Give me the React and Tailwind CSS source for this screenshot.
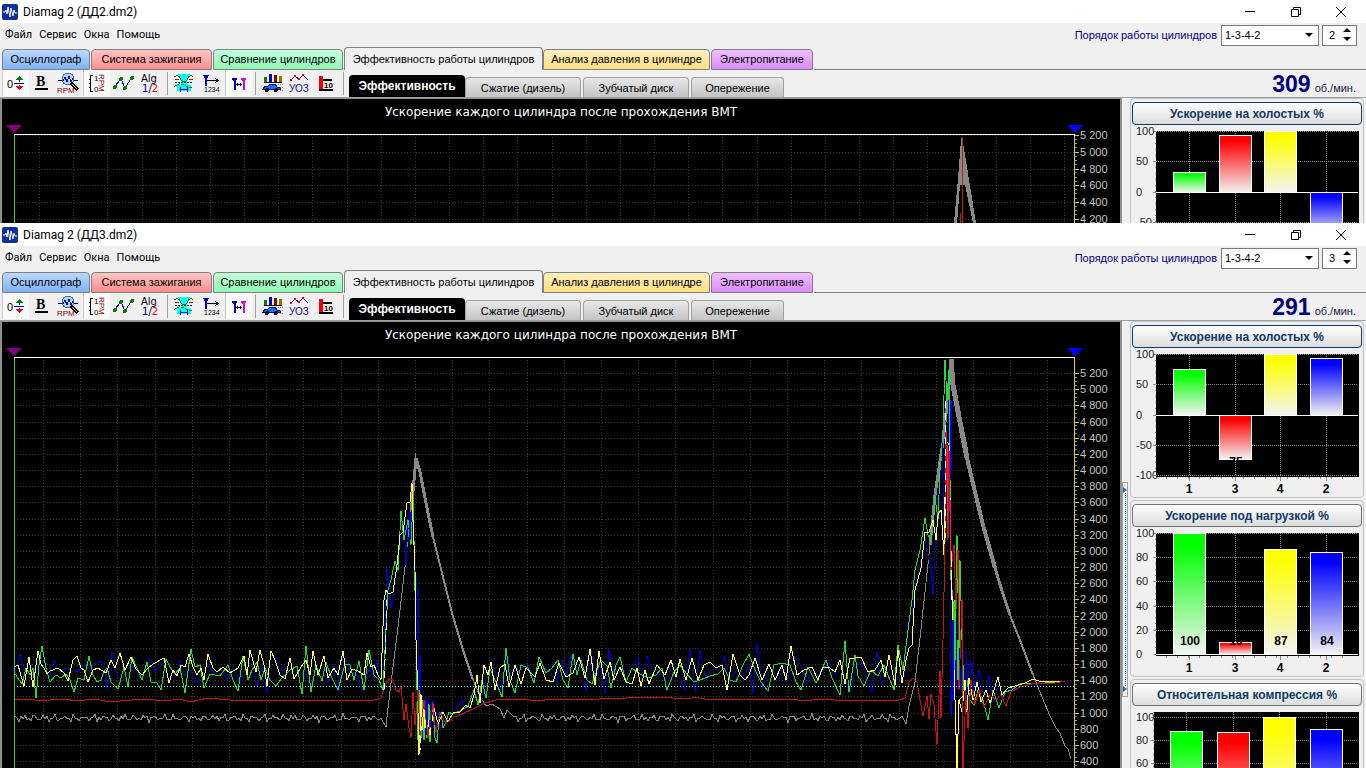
import { useState } from "react";

const mainTabs = [
  { name: "Осциллограф", style: "w-[88px] from-[#bcd8ff] to-[#7fb2f8]" },
  { name: "Система зажигания", style: "w-[121px] from-[#ffc4c4] to-[#fb8e8e]" },
  { name: "Сравнение цилиндров", style: "w-[130px] from-[#c4ffdc] to-[#8ef8b4]" },
  { name: "Эффективность работы цилиндров", style: "w-[199px]", active: true },
  { name: "Анализ давления в цилиндре", style: "w-[167px] from-[#fff0c0] to-[#ffdf80]" },
  { name: "Электропитание", style: "w-[102px] from-[#eebfff] to-[#d98cfa]" },
];

const subTabs = [
  { name: "Сжатие (дизель)", style: "w-[116px]" },
  { name: "Зубчатый диск", style: "w-[106px]" },
  { name: "Опережение", style: "w-[93px]" },
];

const green = "14,672 17,677 22,684 26,668 30,675 33,668 36,698 39,665 42,646 46,668 50,682 56,675 61,678 66,674 70,680 74,692 78,678 84,680 89,656 93,675 97,682 101,680 104,671 107,668 111,682 118,689 124,667 128,687 132,657 137,668 142,680 147,662 151,682 157,683 161,690 166,659 170,667 175,674 180,668 185,693 191,649 195,667 200,665 204,688 210,674 220,676 228,665 233,680 238,691 243,656 248,680 252,670 257,662 261,680 265,668 270,680 276,686 282,678 290,670 297,666 302,694 306,646 311,692 316,665 322,681 326,662 331,676 338,690 345,664 350,665 354,680 359,661 364,690 369,650 374,675 379,680 383,690 386,630 388,590 391,580 395,561 398,570 401,511 404,540 408,520 411,545 413,500 414,540 416,640 417,690 418,740 419,690 421,738 423,700 424,740 426,712 427,738 429,704 430,742 432,712 433,705 435,738 437,743 439,718 441,712 443,728 446,722 449,712 452,714 460,711 468,706 474,690 478,705 482,680 486,698 490,669 496,682 502,697 506,648 510,680 515,693 521,665 528,668 534,683 539,657 546,673 552,668 558,660 563,680 568,688 573,654 577,675 581,660 587,680 592,684 597,670 601,660 607,666 611,688 616,665 620,657 626,682 632,668 638,673 648,678 656,675 662,668 667,690 674,672 680,665 686,673 694,682 700,680 710,676 718,674 724,668 730,680 736,682 743,665 749,654 755,670 761,682 768,691 774,665 782,663 790,665 796,682 801,690 808,667 816,683 826,660 832,678 840,695 845,641 849,692 855,655 858,676 864,686 871,670 878,676 884,665 890,680 894,690 898,645 903,670 908,630 912,600 915,570 920,550 925,518 928,535 931,540 935,497 938,520 940,470 943,430 945,360 947,400 949,370 950,480 951,580 953,600 955,690 956,600 957,535 959,650 960,560 962,640 964,690 967,680 970,700 974,705 978,690 983,700 988,720 993,690 999,708 1005,692 1012,690 1020,684 1030,683 1045,683 1065,681";

const yellow = "14,667 18,665 24,686 29,657 33,687 38,651 41,664 44,668 47,674 50,671 58,668 64,673 68,681 73,660 77,656 81,668 84,670 88,682 93,670 98,668 106,673 111,660 115,668 120,653 125,670 131,657 136,669 142,675 148,668 153,664 164,658 169,683 173,670 177,676 181,665 185,667 189,654 193,667 197,675 201,668 204,680 208,654 213,668 217,672 223,667 230,673 238,668 244,656 247,675 250,650 256,672 260,650 264,665 267,686 271,651 275,660 280,675 285,679 290,658 294,679 301,667 306,660 310,675 313,651 318,675 324,656 328,678 334,668 338,675 343,651 347,680 352,669 358,671 364,675 367,653 371,667 374,665 378,675 381,680 384,600 386,590 389,594 393,592 397,565 400,535 403,532 407,503 410,502 412,483 413,520 415,570 416,640 418,700 419,755 421,694 422,730 424,705 425,728 427,712 430,735 434,708 438,724 443,712 448,722 453,713 460,712 466,705 470,708 474,695 477,675 480,703 484,665 488,675 491,662 495,690 500,668 505,664 509,687 515,665 521,684 526,668 535,677 540,663 546,680 553,682 559,663 566,677 573,673 579,657 585,678 590,649 595,685 599,651 604,679 610,662 614,680 620,667 626,682 632,684 637,668 641,686 645,670 649,684 657,665 665,675 671,660 676,677 680,659 686,680 692,658 698,680 704,665 710,662 716,668 722,665 727,690 733,654 740,675 745,680 749,675 755,658 762,680 769,664 775,680 782,665 786,680 791,646 797,675 804,670 812,667 818,680 823,667 830,668 835,672 840,660 845,684 850,658 855,658 861,657 868,672 875,670 881,660 885,677 889,655 895,685 898,650 902,683 906,660 909,648 912,645 915,590 921,568 925,532 929,532 933,520 936,540 938,515 941,510 944,555 946,440 949,445 951,550 953,640 955,700 957,768 959,700 962,712 965,680 967,712 969,678 973,700 977,682 981,702 986,690 990,703 998,677 1002,695 1008,688 1015,686 1025,683 1033,679 1042,682 1060,681";

const blue = "14,678 17,665 20,654 24,670 30,660 34,678 40,655 44,664 49,677 54,660 60,672 66,668 72,670 78,672 84,664 89,670 94,664 100,661 104,664 107,689 112,651 116,672 120,680 125,664 131,665 137,672 142,680 150,658 155,672 162,662 169,680 175,676 180,660 185,676 191,670 195,683 201,678 207,664 214,673 222,670 227,680 233,667 240,684 246,662 252,664 257,686 262,665 267,692 271,651 277,662 283,676 289,659 294,670 300,677 306,670 310,686 316,670 321,668 328,683 333,666 339,692 343,653 350,671 356,674 363,691 369,668 374,680 377,660 380,680 383,694 385,630 387,568 389,590 391,608 394,590 398,560 401,540 404,520 406,565 408,520 410,538 412,510 415,560 417,590 418,640 419,720 420,655 422,740 423,698 425,735 426,697 428,728 429,702 431,730 433,700 434,728 436,735 437,712 438,730 442,710 444,725 447,719 454,712 462,700 466,710 472,696 478,690 482,700 488,667 494,668 501,690 506,656 510,684 514,665 520,670 528,665 534,679 540,667 546,670 552,664 557,682 562,660 566,677 571,655 576,672 581,657 586,691 591,650 596,680 600,662 605,693 609,650 615,676 622,668 629,675 638,658 643,680 647,656 654,676 661,674 666,680 672,662 678,675 685,690 690,649 695,691 700,650 706,680 713,665 719,670 725,656 730,681 737,669 744,678 749,665 753,693 757,643 763,688 769,665 774,672 779,680 783,664 788,682 792,655 800,664 806,684 813,667 819,677 829,662 835,674 840,659 845,680 850,691 855,672 861,660 867,679 872,692 877,652 882,685 888,666 894,684 900,675 904,678 908,622 912,615 916,580 921,560 925,538 928,555 931,570 933,595 937,500 940,480 942,435 944,520 947,450 949,400 950,415 951,716 954,640 956,690 958,620 961,690 963,650 966,690 970,660 974,690 979,670 984,697 989,676 994,702 999,680 1003,698 1010,688 1016,690 1025,685 1035,684 1045,681 1060,682 1068,681";

const red = "14,700 30,699 40,701 60,699 66,699 75,701 95,699 105,701 120,701 145,699 165,701 180,699 190,702 208,698 230,700 245,700 258,701 280,700 310,700 345,700 375,700 381,698 386,684 390,678 393,680 396,690 399,692 401,686 404,720 406,704 409,728 411,738 413,692 415,725 418,690 420,735 424,700 428,738 432,702 436,732 440,712 446,724 454,717 462,714 475,708 485,703 500,699 530,700 545,700 600,699 655,697 690,699 694,697 710,700 790,699 805,701 820,699 850,701 900,700 905,698 909,682 913,678 917,682 920,700 923,716 927,696 929,719 931,694 934,705 937,745 940,670 941,718 943,640 945,545 946,430 948,540 949,450 951,570 954,545 956,610 958,550 959,690 962,600 963,768 966,690 968,728 971,680 975,704 979,690 984,707 990,695 996,700 1001,695 1006,706 1011,692 1020,687 1035,683 1050,684 1065,681";

// idle part of the shaft speed curve, slightly jagged
function jitter(from, to, level) {
  const points = [];
  for (let x = from; x <= to; x += 2) {
    const wave = Math.sin(x * 1.7) * 2 + Math.sin(x * 0.63 + 2) * 2 + Math.sin(x * 4.1);
    points.push(`${x},${Math.round(level + wave)}`);
  }
  return points.join(" ");
}

const shaftStart = `${jitter(15, 382, 718)} 386,727 388,708 391,683 398,627 405,567 411,507 416,453`;
const shaftMiddle = `473,680 480,696 486,706 492,704 500,709 504,718 507,710 513,716 ${jitter(516, 902, 718)} 906,724 909,706 915,682 920,638 925,592 930,545 935,495`;

function ShaftSpeed() {
  return (
    <g fill="none" stroke="#888">
      <polyline points={shaftStart} />
      <polyline strokeWidth="3" points="411,515 414,480 416,458 420,472 427,508 433,537" />
      <polyline strokeWidth="2" points="433,537 442,573 452,613 463,650 473,680" />
      <polyline points={shaftMiddle} />
      <polyline strokeWidth="3" points="930,545 935,495 942,448 947,405 951,362" />
      <polyline strokeWidth="5" points="951,359 953,385 960,422 967,458" />
      <polyline strokeWidth="4" points="967,458 975,492 983,525 995,568" />
      <polyline strokeWidth="3" points="995,568 1003,594 1010,615" />
      <polyline strokeWidth="2" points="1010,615 1023,648 1033,675" />
      <polyline points="1033,675 1040,692 1050,716 1056,728 1060,733 1065,746 1068,749 1071,759" />
    </g>
  );
}

function Signals() {
  return (
    <g fill="none">
      <polyline stroke="#0000c8" points={blue} />
      <polyline stroke="#22dd33" points={green} />
      <polyline stroke="#ffff50" points={yellow} />
      <polyline stroke="#c81414" points={red} />
      <path stroke="#0000e0" strokeWidth="2" d="M951 400V470M953 620V700M956 655V690M410 512V540M427 705V725" />
      <path stroke="#0000c8" d="M418.5 588V690M426.5 700V735M431.5 702V730M966.5 650V700M972.5 662V690" />
      <path stroke="#ff1493" d="M947 445V520M950 500V560M433 704V715" />
      <path stroke="#fff" strokeDasharray="7 5" d="M384 690L387 600M945 540L946 400M951 560V600M420 700V750M959 700L970 690" />
      <path stroke="#22dd33" strokeWidth="2" d="M955 600V660M958 640V680" />
    </g>
  );
}

function AccelerationChart({ file }) {
  const { origin, top, step, gridX, gridStep } = file;
  const rows = Array.from({ length: file.rows }, (_, i) => top + i * step);
  const columns = Array.from({ length: 31 }, (_, i) => gridX + i * gridStep).filter((x) => x < 1070);

  return (
    <div className="flex">
      <div className="ml-3 min-w-0 flex-1">
        <div className="-mx-2 flex h-[9px] justify-between">
          <svg width="16" height="9"><path d="M0 0H16L8 8z" fill="#800080" /></svg>
          <svg width="16" height="9"><path d="M0 0H16L8 8z" fill="#0000ff" /></svg>
        </div>
        <svg
          className="block h-[411px] w-full"
          viewBox={`14 ${origin} 1061 411`}
          preserveAspectRatio="none"
          shapeRendering="crispEdges"
        >
          <g stroke="#3c3c1e" strokeDasharray="1 2">
            {columns.map((x) => (
              <path key={x} d={`M${Math.round(x) + 0.5} ${origin}v411`} />
            ))}
            {rows.map((y) => (
              <path key={y} d={`M14 ${Math.round(y) + 0.5}H1075`} />
            ))}
          </g>
          {file.full ? (
            <>
              <ShaftSpeed />
              <Signals />
              <path d="M14 686.5H1075" stroke="#50ffff" strokeDasharray="1 2" />
            </>
          ) : (
            <>
              <path d="M954 223L958 178L961 140L962 137L965 155L976 223H973L965 185L960 185L957 223z" fill="#888" />
              <path d="M962.5 137V545M960.5 213V545" stroke="#d01414" />
            </>
          )}
          <path d={`M14.5 ${origin}v411`} stroke="#50c850" />
          <path d={`M1074.5 ${origin}v411`} stroke="#d0d050" />
          <path d={`M14 ${origin + 0.5}H1075`} stroke="#fff" />
        </svg>
      </div>
      <svg
        className="mt-[9px] block h-[411px] w-[45px] shrink-0 overflow-visible font-['Liberation_Sans'] text-[11px]"
        viewBox={`1075 ${origin} 45 411`}
      >
        {rows.map((y, i) => (
          <g key={y}>
            <path d={`M1074 ${Math.round(y) + 0.5}h5`} stroke="#d0d050" shapeRendering="crispEdges" />
            <path
              d={`M1075 ${y + step / 4}h2M1075 ${y + step / 2}h2M1075 ${y + (step * 3) / 4}h2`}
              stroke="#909040"
              shapeRendering="crispEdges"
            />
            <text x="1080" y={Math.round(y) + 4} fill="#c4c4c4">
              {(5200 - i * 200).toString().replace(/^(\d)(\d{3})$/, "$1 $2")}
            </text>
          </g>
        ))}
      </svg>
    </div>
  );
}

const barColors = ["#00ff00", "#ff0000", "#ffff00", "#0000ff"];

function BarPanel({ title, id, ticks, bars, labels, selected, shifted, offset }) {
  const min = ticks[ticks.length - 1];
  const first = offset || 0;
  const span = 121 - first;
  const getY = (value) => Math.round(first + ((100 - value) / (100 - min)) * span);
  const left = shifted ? 22 : 24;
  const xs = shifted ? [38, 85, 131, 178] : [41, 87, 132, 178];
  const zero = getY(0);

  return (
    <div className="h-[177px] shrink-0 rounded border border-[#c3c3c3] px-px pt-[3px]">
      <button
        className={`block h-[23px] w-full rounded-sm border bg-linear-to-b from-white to-[#dcdcdc] font-['Liberation_Sans'] text-[12px] leading-5 font-bold text-[#123a66] ${
          selected ? "border-[#123a66]" : "border-[#707070]"
        }`}
      >
        {title}
      </button>
      <svg className="mt-[6px] block h-[143px] w-[230px] overflow-visible font-['Liberation_Sans'] text-[11px]" viewBox="0 0 230 143">
        <defs>
          {barColors.map((color, i) => (
            <linearGradient key={color} id={`${id}-${i}`} x1="0" y1="0" x2="0" y2="1">
              <stop offset="0.1" stopColor={color} />
              <stop offset="1" stopColor="#f4f4f4" />
            </linearGradient>
          ))}
        </defs>
        <rect x={left} width={227 - left} height="123" />
        <g stroke="#8c8c8c" shapeRendering="crispEdges">
          {ticks.map((tick) => (
            <path key={tick} strokeDasharray="1 1" d={`M${left} ${getY(tick) + 0.5}H226`} />
          ))}
          {xs.map((x) => (
            <path key={x} strokeDasharray="1 1" d={`M${x + 16.5} 0V122`} />
          ))}
          {ticks.map((tick) => (
            <path key={tick} d={`M${left - 3} ${getY(tick) + 0.5}h3`} />
          ))}
          {Array.from({ length: 20 }, (_, i) => (
            <path key={i} d={`M${left - 1} ${i * 6 + 0.5}h1`} />
          ))}
          {Array.from({ length: 17 }, (_, i) => (
            <path key={i} d={`M${34.5 + i * 11} 123v2`} />
          ))}
          {xs.map((x) => (
            <path key={x} d={`M${x + 16.5} 123v4`} />
          ))}
        </g>
        <g fill="#222" className="text-[11px]">
          {ticks.map((tick) => (
            <text key={tick} x="4" y={getY(tick) + 4}>{tick}</text>
          ))}
        </g>
        {bars.map((value, i) => {
          const y = value > 0 ? getY(value) : zero;
          return (
            <rect
              key={i}
              x={xs[i] + 0.5}
              y={y + 0.5}
              width="32"
              height={Math.abs(getY(value) - zero)}
              fill={`url(#${id}-${i})`}
              stroke="#fff"
            />
          );
        })}
        <path d={`M${left} ${zero + 0.5}H226`} stroke="#fff" shapeRendering="crispEdges" />
        <g textAnchor="middle" className="text-[12px] font-bold">
          {labels.map((label, i) => (
            <text key={i} x={xs[i] + 17} y="112">{label}</text>
          ))}
          {[1, 3, 4, 2].map((cylinder, i) => (
            <text key={cylinder} x={xs[i] + 16} y="139">{cylinder}</text>
          ))}
        </g>
      </svg>
    </div>
  );
}

const icons = {
  zero: (
    <>
      <text x="4" y="17" fontSize="11">0</text>
      <path d="M11 12.5H21" stroke="#0000a0" />
      <path d="M16.5 11V7M16.5 14V17" stroke="#222" />
      <path d="M13 9L16.5 5L20 9z" fill="#008000" />
      <path d="M13 15L16.5 19L20 15z" fill="#f00000" />
    </>
  ),
  bold: (
    <>
      <text x="7" y="15" fontSize="14" fontWeight="bold" fontFamily="Liberation Serif">B</text>
      <path d="M6 18H19" stroke="#000" strokeWidth="2" />
    </>
  ),
  rpm: (
    <>
      <path d="M2 9.5H22" stroke="#0000c0" />
      <circle cx="12" cy="8" r="6" fill="#a9d8f0" stroke="#4a6b88" />
      <path d="M7 10L9 6L11 11L13 5L15 11L17 7" fill="none" stroke="#0000c0" />
      <path d="M15 12L22 19" stroke="#000" strokeWidth="3" />
      <path d="M16 13L21 18" stroke="#ffd000" />
      <text x="1" y="22" fontSize="8" fill="#900000">RPM</text>
    </>
  ),
  scale: (
    <>
      <path d="M9 4.5H6.5V20.5H9M5 8.5H7M5 12.5H7M5 16.5H7" fill="none" stroke="#000" />
      <text x="10" y="10" fontSize="8">1</text>
      <text x="10" y="21" fontSize="8">0</text>
      <text transform="translate(15 3) rotate(90)" fontSize="8" fill="#900000">RPM</text>
    </>
  ),
  line: (
    <>
      <path d="M5 15L11 8L15 17L22 6" fill="none" stroke="#0000c0" />
      <g fill="#008000">
        <circle cx="5" cy="16" r="2" />
        <circle cx="11" cy="8" r="2" />
        <circle cx="15" cy="17" r="2" />
        <circle cx="22" cy="7" r="2" />
      </g>
    </>
  ),
  alg: (
    <>
      <text x="4" y="11" fontSize="10" fontFamily="DejaVu Sans">Alg</text>
      <text x="5" y="21" fontSize="10" fontFamily="DejaVu Sans" fill="#0000a0">1<tspan fill="#000">/</tspan><tspan fill="#f00000">2</tspan></text>
    </>
  ),
  gap: (
    <>
      <path d="M7 3H19L16 7V14H20V20H6V14H10V7z" fill="#00ffff" />
      <path d="M3 6Q7 3 9 7T13 11T17 7T22 6" fill="none" stroke="#008000" />
      <path d="M4 8H8M18 8H22" stroke="#e00000" />
      <path d="M4 11.5H22" stroke="#003060" strokeDasharray="2 1" />
      <path d="M3 16Q8 11 13 14T22 16" fill="none" stroke="#008000" strokeDasharray="3 1" />
      <path d="M9 18.5H17M9.5 16V21M16.5 16V21" stroke="#0000c0" />
    </>
  ),
  order: (
    <>
      <path d="M5 4H11L8.5 7V14H7.5V7z" fill="#0000c0" stroke="#0000c0" />
      <path d="M9 9.5H20M17 7L20 9.5L17 12" fill="none" stroke="#000" />
      <text x="6" y="21" fontSize="7">1234</text>
    </>
  ),
  cursors: (
    <>
      <path d="M6 7H11L9 10V18H8V10z" fill="#0000c0" stroke="#0000c0" />
      <path d="M15 7H20L18 10V18H17V10z" fill="#e000e0" stroke="#e000e0" />
      <path d="M10 13.5H16M11.5 12V15M14.5 12V15" stroke="#000" />
    </>
  ),
  car: (
    <>
      <path d="M5 6H8V11H5z" fill="#008000" />
      <path d="M10 3H13V11H10z" fill="#0000c0" />
      <path d="M15 4H18V11H15z" fill="#900000" />
      <path d="M20 5H23V11H20z" fill="#808000" />
      <path d="M5 11.5H23" stroke="#000" />
      <path d="M4 18L6 15H9L11 13H16L18 16H21V18H4z" fill="#0078ff" stroke="#000080" />
      <circle cx="8" cy="19" r="2" />
      <circle cx="17" cy="19" r="2" />
      <path d="M19 13H24M21 16H24M21 19H24" stroke="#808080" strokeDasharray="1 1" />
    </>
  ),
  uoz: (
    <>
      <path d="M5 9L9 5L13 8L17 4L22 9" fill="none" stroke="#0000c0" />
      <path d="M4 8H6V10H4zM8 4H10V6H8zM12 7H14V9H12zM16 3H18V5H16z" fill="#e00000" />
      <text x="3" y="21" fontSize="10" fill="#101080">УОЗ</text>
    </>
  ),
  ten: (
    <>
      <path d="M6 5H10V18H6z" fill="#f00000" />
      <path d="M6 19H20M10 9H19" stroke="#000" strokeWidth="2" />
      <text x="11" y="17" fontSize="8" fontWeight="bold">10</text>
    </>
  ),
};

const toolGroups = [
  ["zero", "bold", "rpm", "scale", "line", "alg"],
  ["gap", "order", "cursors"],
  ["car", "uoz", "ten"],
];

const pressedTools = ["zero", "scale", "cursors"];

function Toolbar({ speed }) {
  return (
    <div className="flex h-7 border-b border-[#a0a0a0] pl-0.5">
      {toolGroups.map((group, i) => (
        <div key={i} className="flex">
          {group.map((tool) => (
            <button
              key={tool}
              aria-label={tool}
              className={`h-[26px] w-[27px] ${pressedTools.includes(tool) ? "border-l border-[#c8c8c8] bg-[#f9f9f9]" : ""}`}
            >
              <svg width="25" height="24" className="font-['Liberation_Sans']" shapeRendering="crispEdges">
                {icons[tool]}
              </svg>
            </button>
          ))}
          <div className="mx-[3px] my-0.5 w-px bg-[#a0a0a0]" />
        </div>
      ))}
      <div className="ml-0.5 flex items-end font-['Liberation_Sans'] text-[11px]">
        <button className="h-[22px] w-[116px] rounded-t bg-black text-[12px] leading-[22px] font-bold text-white">
          Эффективность
        </button>
        {subTabs.map((tab) => (
          <button
            key={tab.name}
            className={`mr-0.5 h-5 rounded-t border border-b-0 border-[#a0a0a0] bg-linear-to-b from-[#e8e8e8] to-[#c4c4c4] leading-[18px] whitespace-nowrap ${tab.style}`}
          >
            {tab.name}
          </button>
        ))}
      </div>
      <div className="ml-auto flex items-baseline gap-1 pr-2.5 font-['Liberation_Sans'] text-[11px] text-[#000080]">
        <b className="text-[23px] leading-7">{speed}</b>
        <span className="text-[#202040]">об./мин.</span>
      </div>
    </div>
  );
}

function TitleBar({ name }) {
  return (
    <div className="flex h-[23px] items-center bg-white pl-0.5 font-['Roboto'] text-[12px]">
      <svg width="16" height="16" className="mr-[5px]">
        <rect width="16" height="16" rx="2" fill="#10309c" />
        <path d="M1 8H3L4 6L5 10L6 3L8 13L9 4L11 12L12 6L13 9H15" fill="none" stroke="#fff" />
      </svg>
      Diamag 2 ({name})
      <div className="ml-auto flex pr-0.5">
        <button aria-label="Свернуть" className="flex h-5 w-[46px] items-center justify-center">
          <svg width="10" height="10"><path d="M0 4.5H10" stroke="#000" /></svg>
        </button>
        <button aria-label="Восстановить" className="flex h-5 w-[45px] items-center justify-center">
          <svg width="10" height="10" fill="none" stroke="#000"><path d="M.5 2.5H7.5V9.5H.5zM2.5 2V.5H9.5V7.5H8" /></svg>
        </button>
        <button aria-label="Закрыть" className="flex h-5 w-[46px] items-center justify-center">
          <svg width="10" height="10" stroke="#000"><path d="M0 0L10 10M10 0L0 10" /></svg>
        </button>
      </div>
    </div>
  );
}

function MenuBar({ id, cylinder }) {
  const [order, setOrder] = useState("1-3-4-2");
  const [number, setNumber] = useState(cylinder);

  return (
    <div className="flex h-6 items-center pl-[5px]">
      <div className="flex gap-[7px] font-['Roboto'] text-[11px]">
        <button>Файл</button>
        <button>Сервис</button>
        <button>Окна</button>
        <button>Помощь</button>
      </div>
      <label htmlFor={`order-${id}`} className="mr-1 ml-auto font-['Liberation_Sans'] text-[11px] text-[#000080]">
        Порядок работы цилиндров
      </label>
      <div className="relative mr-[3px]">
        <select
          id={`order-${id}`}
          value={order}
          onChange={(e) => setOrder(e.target.value)}
          className="block h-[21px] w-[98px] appearance-none border border-[#7a7a7a] bg-white px-[3px] font-['Liberation_Sans'] text-[11px]"
        >
          <option>1-3-4-2</option>
          <option>1-2-4-3</option>
        </select>
        <svg width="8" height="5" className="pointer-events-none absolute top-2 right-1.5"><path d="M0 0H8L4 4z" /></svg>
      </div>
      <div className="mr-[9px] flex h-[21px] w-[35px] items-center border border-[#7a7a7a] bg-white">
        <input
          aria-label="Номер цилиндра"
          value={number}
          onChange={(e) => setNumber(e.target.value)}
          className="w-5 pl-[6px] font-['Liberation_Sans'] text-[11px] outline-none"
        />
        <svg width="8" height="14"><path d="M0 4L4 0L8 4zM0 9H8L4 13z" /></svg>
      </div>
    </div>
  );
}

function Splitter() {
  return (
    <div className="mt-[161px] flex h-[215px] w-1.5 shrink-0 flex-col items-center justify-between border border-[#a0a0a0] bg-[#f4f4f4] py-1">
      <svg width="4" height="6"><path d="M0 0L4 3L0 6z" fill="#1470b8" /></svg>
      <div className="flex-1 border-l border-dotted border-[#1470b8]" />
      <svg width="4" height="6"><path d="M0 0L4 3L0 6z" fill="#1470b8" /></svg>
    </div>
  );
}

function DiamagWindow({ file, className }) {
  return (
    <section className={`flex flex-col overflow-hidden bg-[#f0f0f0] text-black ${className}`}>
      <TitleBar name={file.name} />
      <MenuBar id={file.id} cylinder={file.cylinder} />
      <div className="flex h-[23px] shrink-0 items-end pl-0.5 font-['Liberation_Sans'] text-[11px]">
        {mainTabs.map((tab) => (
          <button
            key={tab.name}
            className={`shrink-0 rounded-t border border-[#808080] whitespace-nowrap ${tab.style} ${
              tab.active ? "h-[23px] border-b-0 bg-[#f0f0f0]" : "mr-px h-[21px] bg-linear-to-b"
            }`}
          >
            {tab.name}
          </button>
        ))}
        <div className="flex-1 border-b border-[#808080]" />
      </div>
      <Toolbar speed={file.speed} />
      <div className="flex min-h-0 flex-1 overflow-hidden">
        <div className="min-w-0 flex-1 border-t border-r-2 border-l-2 border-[#909090] bg-black">
          <h1 className="h-[26px] text-center font-['DejaVu_Sans'] text-[12px] leading-[26px] text-white">
            Ускорение каждого цилиндра после прохождения ВМТ
          </h1>
          <AccelerationChart file={file} />
        </div>
        <Splitter />
        <div className="mr-0.5 ml-0.5 flex w-[234px] shrink-0 flex-col gap-0.5">
          <BarPanel id={`idle-${file.id}`} title="Ускорение на холостых %" ticks={[100, 50, 0, -50, -100]} bars={file.idle} labels={["", file.id === "dd3" ? "75" : ""]} selected />
          <BarPanel id={`load-${file.id}`} title="Ускорение под нагрузкой %" ticks={[100, 80, 60, 40, 20, 0]} bars={[100, 10, 87, 84]} labels={[100, 10, 87, 84]} />
          <BarPanel id={`comp-${file.id}`} title="Относительная компрессия %" ticks={[100, 80, 60, 40, 20, 0]} bars={[88, 87, 100, 90]} labels={[]} shifted offset={5} />
        </div>
      </div>
    </section>
  );
}

const files = [
  { id: "dd2", name: "ДД2.dm2", cylinder: 2, speed: 309, origin: 134, top: 135, step: 16.8, rows: 6, gridX: 39, gridStep: 34.17, idle: [33, 93, 100, -75] },
  { id: "dd3", name: "ДД3.dm2", cylinder: 3, speed: 291, origin: 357, top: 373, step: 16.17, rows: 25, gridX: 43, gridStep: 37.2, idle: [75, -74, 100, 93], full: true },
];

function App() {
  return (
    <main className="flex h-screen flex-col overflow-hidden bg-[#f0f0f0]">
      <DiamagWindow file={files[0]} className="h-[223px] shrink-0" />
      <DiamagWindow file={files[1]} className="min-h-0 flex-1" />
    </main>
  );
}

export default App;
